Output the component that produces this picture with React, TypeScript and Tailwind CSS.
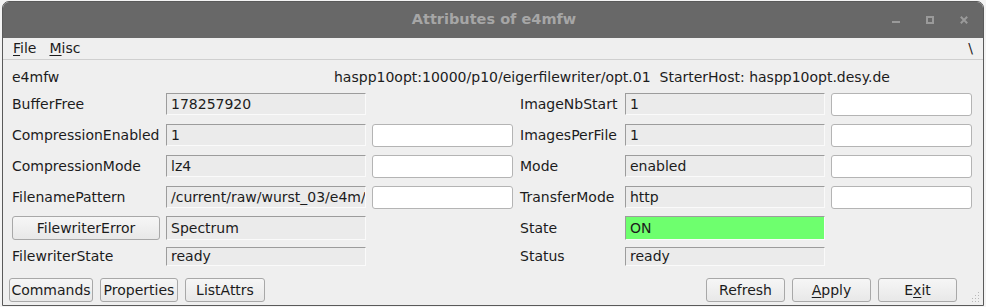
import type { ReactNode } from 'react';

const font = { fontFamily: '"DejaVu Sans", "Liberation Sans", sans-serif' };

function Field({ value, width = 'w-[200px]', green = false, h = 'h-[22px]' }: { value: string; width?: string; green?: boolean; h?: string }) {
  return (
    <div
      className={`${width} ${h} shrink-0 overflow-hidden whitespace-nowrap border border-t-[#9c9c9c] border-l-[#9c9c9c] border-b-[#fafafa] border-r-[#fafafa] pl-[4px] flex items-center text-[14px] text-[#1c1c1c] ${green ? 'bg-[#6eff6e]' : 'bg-[#ebebeb]'}`}
    >
      {value}
    </div>
  );
}

function Entry() {
  return <div className="w-[141px] h-[23px] shrink-0 rounded-[3px] border border-[#b4b4b4] bg-white" />;
}

function Button({ children, className = '' }: { children: ReactNode; className?: string }) {
  return (
    <div
      className={`h-[24px] shrink-0 rounded-[3px] border border-[#a8a8a8] bg-gradient-to-b from-[#f6f6f6] to-[#e8e8e8] flex items-center justify-center text-[14px] text-[#1c1c1c] ${className}`}
    >
      {children}
    </div>
  );
}

type Row = { label: ReactNode; value: string; entry?: boolean; green?: boolean };

function Side({ rows, labelW }: { rows: Row[]; labelW: string }) {
  const tops = ['mt-0', 'mt-[9px]', 'mt-[9px]', 'mt-[9px]', 'mt-[8px]', 'mt-[7px]'];
  const hs = ['h-[22px]', 'h-[22px]', 'h-[22px]', 'h-[22px]', 'h-[24px]', 'h-[19px]'];
  return (
    <div className="flex flex-col">
      {rows.map((r, i) => (
        <div key={i} className={`flex items-center ${tops[i]} ${hs[i]}`}>
          <div className={`${labelW} shrink-0 text-[14px] text-[#1c1c1c] flex items-center`}>{r.label}</div>
          <Field value={r.value} green={r.green} h={hs[i]} />
          {r.entry && <div className="ml-[6px]"><Entry /></div>}
        </div>
      ))}
    </div>
  );
}

export default function App() {
  const left: Row[] = [
    { label: 'BufferFree', value: '178257920' },
    { label: 'CompressionEnabled', value: '1', entry: true },
    { label: 'CompressionMode', value: 'lz4', entry: true },
    { label: 'FilenamePattern', value: '/current/raw/wurst_03/e4m/', entry: true },
    { label: <Button className="w-[148px]">FilewriterError</Button>, value: 'Spectrum' },
    { label: 'FilewriterState', value: 'ready' },
  ];
  const right: Row[] = [
    { label: 'ImageNbStart', value: '1', entry: true },
    { label: 'ImagesPerFile', value: '1', entry: true },
    { label: 'Mode', value: 'enabled', entry: true },
    { label: 'TransferMode', value: 'http', entry: true },
    { label: 'State', value: 'ON', green: true },
    { label: 'Status', value: 'ready' },
  ];

  return (
    <div className="w-[986px] h-[307px] bg-[#f4f4f4] overflow-hidden pt-[1px] pl-[2px]" style={font}>
      <div className="w-[982px] h-[305px] rounded-t-[7px] border border-[#5a5a5a] bg-[#efefef] overflow-hidden flex flex-col">
        {/* title bar */}
        <div className="h-[36px] shrink-0 bg-[#686868] relative flex items-center justify-center">
          <span className="text-[14.5px] font-bold text-[#a6a6a6] pl-[2px]">Attributes of e4mfw</span>
          <div className="absolute right-[15px] top-[14px] flex items-start gap-[26px]">
            <svg width="8" height="8" viewBox="0 0 8 8"><rect x="0" y="5" width="8" height="2" fill="#9a9a9a" /></svg>
            <svg width="8" height="8" viewBox="0 0 8 8"><rect x="1" y="1" width="6" height="6" fill="none" stroke="#9a9a9a" strokeWidth="2" /></svg>
            <svg width="8" height="8" viewBox="0 0 8 8"><path d="M0.8 0.8l6.4 6.4M7.2 0.8l-6.4 6.4" stroke="#9a9a9a" strokeWidth="2" /></svg>
          </div>
        </div>
        {/* menu bar */}
        <div className="h-[22px] shrink-0 border-b border-[#cfcfcf] flex items-center text-[14px] text-[#1c1c1c] pl-[10px] pr-[10px]">
          <span><span className="underline underline-offset-2">F</span>ile</span>
          <span className="ml-[13px]"><span className="underline underline-offset-2">M</span>isc</span>
          <span className="ml-auto">\</span>
        </div>
        {/* header */}
        <div className="h-[33px] shrink-0 flex items-center pl-[9px] text-[14px] text-[#1c1c1c] pt-[1px]">
          <span className="w-[322px] shrink-0">e4mfw</span>
          <span className="whitespace-pre">haspp10opt:10000/p10/eigerfilewriter/opt.01  StarterHost: haspp10opt.desy.de</span>
        </div>
        {/* attributes */}
        <div className="flex pl-[9px]">
          <div className="w-[508px] shrink-0">
            <Side rows={left} labelW="w-[154px]" />
          </div>
          <Side rows={right} labelW="w-[105px]" />
        </div>
        {/* bottom buttons */}
        <div className="mt-[12px] flex items-center pl-[6px] pr-[26px] relative">
          <Button className="w-[84px]">Commands</Button>
          <Button className="w-[78px] ml-[7px]">Properties</Button>
          <Button className="w-[80px] ml-[7px]">ListAttrs</Button>
          <div className="ml-auto flex gap-[7px]">
            <Button className="w-[79px]">Refresh</Button>
            <Button className="w-[79px]"><span><span className="underline underline-offset-2">A</span>pply</span></Button>
            <Button className="w-[79px]"><span>E<span className="underline underline-offset-2">x</span>it</span></Button>
          </div>
          <svg className="absolute right-[3px] top-[14px]" width="10" height="10" viewBox="0 0 10 10">
            <g fill="#b8b8b8">
              <rect x="8" y="0" width="1" height="1" />
              <rect x="5" y="3" width="1" height="1" /><rect x="8" y="3" width="1" height="1" />
              <rect x="2" y="6" width="1" height="1" /><rect x="5" y="6" width="1" height="1" /><rect x="8" y="6" width="1" height="1" />
              <rect x="2" y="9" width="1" height="1" /><rect x="5" y="9" width="1" height="1" /><rect x="8" y="9" width="1" height="1" />
            </g>
          </svg>
        </div>
      </div>
    </div>
  );
}
